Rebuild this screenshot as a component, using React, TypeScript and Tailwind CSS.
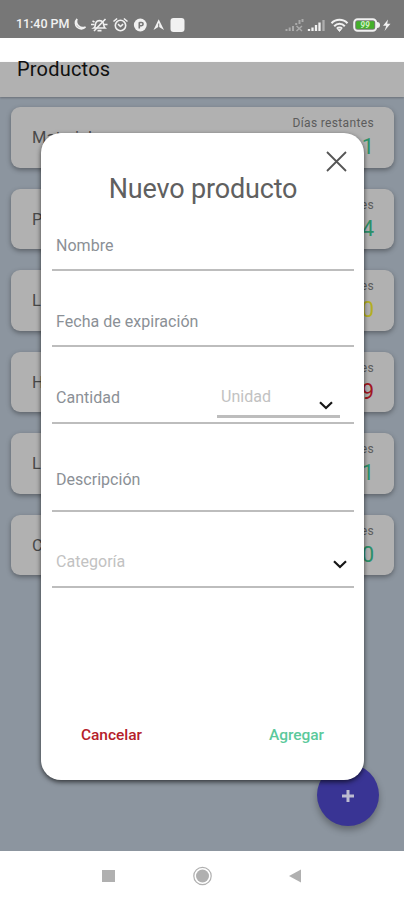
import React from "react";

const products = [
    { name: "Material", days: "11", color: "text-[#2c8f68]" },
    { name: "Pan", days: "14", color: "text-[#2c8f68]" },
    { name: "Luz", days: "10", color: "text-[#b3ae22]" },
    { name: "Hilo", days: "-9", color: "text-[#a11620]" },
    { name: "Lima", days: "31", color: "text-[#2c8f68]" },
    { name: "Col", days: "60", color: "text-[#2c8f68]" },
]

function StatusBar() {
    return (
        <div className="flex h-[38px] items-center bg-[#777777] pl-4 pr-[13px] pt-[11px] text-[#f1f1f1]">
            <span className="w-[55px] whitespace-nowrap text-[12.5px] font-medium leading-none tracking-[-0.05px]">11:40 PM</span>
            <svg className="h-4 w-[116px] shrink-0" viewBox="0 0 116 16" fill="none" stroke="currentColor" strokeWidth="1.6">
                <path d="M6 2a5.800 5.800 0 1 0 8.500 8A6.300 6.300 0 0 1 6 2Z" />
                <path d="M23 11c1.600-1 1-3.500 2-5.500 1.500-2.500 5.500-2.500 7 0 1 2 .4 4 2 5.500Z" />
                <path d="M26.500 13.600h4M34.500 2 23 14M20 7.500h3.500M33 7.500h3.500M21.500 4l2 1" />
                <circle cx="49.500" cy="8.500" r="5.200" />
                <path d="M47 7.200 49.500 9.500l2.600-2.300M42.500 4.500l3.600-3M56.500 4.500l-3.600-3" />
                <circle cx="69.300" cy="8" r="6.400" fill="currentColor" stroke="none" />
                <path d="M68.300 11.500V5.200M68.300 5.500h2.200a1.600 1.600 0 0 1 0 3.200h-2.200" stroke="#777777" />
                <path d="M82.500 13 87.700 2.300 93 13l-5.300-3.200Z" fill="currentColor" stroke="none" />
                <path d="M87.700 6.500v3.700" stroke="#777777" strokeWidth="1" />
                <rect x="99.500" y="1" width="14" height="14" rx="3" fill="currentColor" stroke="none" />
            </svg>
            <svg className="ml-auto h-4 w-[106px] shrink-0" viewBox="0 0 106 16" fill="none" stroke="currentColor">
                <g opacity=".42" strokeWidth="2">
                    <path d="M1.500 14v-2M4.700 14v-3.500M8 14V9M11.200 8V6M14.500 7V3M17.500 5V2" />
                    <path d="m11.500 9 5.500 5M17 9l-5.500 5" strokeWidth="1.500" />
                </g>
                <path d="M24 14v-2M27.500 14v-3.500M31 14V8M34.500 14V5.500" strokeWidth="2.300" />
                <path d="M38.500 14V3" strokeWidth="2.300" opacity=".45" />
                <path d="M46.500 6.300a11 11 0 0 1 16 0M49.200 9.200a7.200 7.200 0 0 1 10.600 0M51.800 11.600a3.900 3.900 0 0 1 5.400 0" strokeWidth="2" />
                <path d="m52.700 12.200 1.800 2.300 1.800-2.300Z" fill="currentColor" />
                <rect x="69.200" y="2.200" width="22" height="11.600" rx="3.500" fill="#777777" strokeWidth="2" />
                <path d="M92 5q3 0 3 3t-3 3Z" fill="currentColor" stroke="none" />
                <rect x="71.200" y="4.200" width="18" height="7.600" rx="1" fill="#43b02a" stroke="none" />
                <text x="80" y="11" fontSize="8.500" fontWeight="700" fontStyle="italic" textAnchor="middle" fill="#cdebc4" stroke="none">99</text>
                <path d="m103 2.500-5 6.300h3.300L99.500 14l6-7.200h-3.300Z" fill="currentColor" stroke="none" />
            </svg>
        </div>
    )
}

function ProductCard({ name, days, color }: { name: string, days: string, color: string }) {
    return (
        <div className="flex h-[60.500px] shrink-0 justify-between rounded-[9px] bg-[#b1b1b1] pl-[21px] pr-5 shadow-[0_2px_5px_rgba(0,0,0,0.35)]">
            <span className="pt-[19px] text-[16.500px] leading-6 text-[#494949]">{name}</span>
            <div className="flex flex-col items-end pt-[8px]">
                <span className="text-[12px] leading-4 tracking-[0.35px] text-[#5c5c5c]">Días restantes</span>
                <span className={"pt-[3px] text-[22px] leading-[26px] " + color}>{days}</span>
            </div>
        </div>
    )
}

function Chevron() {
    return (
        <svg className="h-[9px] w-[14px]" viewBox="0 0 14 9" fill="none" stroke="#161616" strokeWidth="2.200">
            <path d="m1 1.300 6 5.700 6-5.700" />
        </svg>
    )
}

function Field({ label, size }: { label: string, size: string }) {
    return (
        <div className={"flex items-end border-b-2 border-[#bdbdbd] pl-[4px] text-[#8b9096] " + size}>
            <span className="text-[16px] leading-5 tracking-[0.03px]">{label}</span>
        </div>
    )
}

function NewProduct() {
    return (
        <div className="absolute left-[41px] top-[133px] flex h-[647px] w-[323px] flex-col rounded-[20px] bg-white pl-[11px] pr-[10px] shadow-[0_2px_5px_rgba(0,0,0,0.65)]">
            <button className="mr-[7px] mt-[18px] self-end">
                <svg className="h-[21px] w-[21px]" viewBox="0 0 21 21" stroke="#555555" strokeWidth="1.800">
                    <path d="m1 1 19 19M20 1 1 20" />
                </svg>
            </button>
            <h2 className="h-8 pt-px text-center text-[27px] leading-8 tracking-[-0.17px] text-[#606060]">Nuevo producto</h2>
            <Field label="Nombre" size="h-[67px] pb-[13px]" />
            <Field label="Fecha de expiración" size="h-[76px] pb-[13px]" />
            <div className="flex h-[77px] items-end border-b-2 border-[#bdbdbd] pl-[4px]">
                <span className="w-[161px] pb-[14px] text-[16px] leading-5 tracking-[0.03px] text-[#8b9096]">Cantidad</span>
                <div className="mb-[4px] flex h-[34px] w-[123px] justify-between border-b-[3px] border-[#bdbdbd] pl-[4px] pr-[7px]">
                    <span className="pt-[3px] text-[16px] leading-5 tracking-[0.03px] text-[#c2c2c2]">Unidad</span>
                    <div className="pt-[17px]"><Chevron /></div>
                </div>
            </div>
            <Field label="Descripción" size="h-[88px] pb-[20px]" />
            <div className="flex h-[76px] items-end justify-between border-b-2 border-[#bdbdbd] pl-[4px] pr-[7px]">
                <span className="pb-[14px] text-[16px] leading-5 tracking-[0.03px] text-[#c2c2c2]">Categoría</span>
                <div className="pb-[17px]"><Chevron /></div>
            </div>
            <div className="mt-auto flex justify-between pb-[35px] pl-[29px] pr-[30px] text-[15.500px] font-medium leading-5 tracking-[-0.05px]">
                <button className="text-[#b5202a]">Cancelar</button>
                <button className="text-[#5bc99b]">Agregar</button>
            </div>
        </div>
    )
}

export default function App() {
    return (
        <div className="relative flex h-[900px] w-[404px] flex-col overflow-hidden bg-white font-['Roboto',sans-serif]">
            <StatusBar />
            <div className="h-6 shrink-0 bg-white" />
            <div className="z-10 flex h-[35px] shrink-0 bg-[#b1b1b1] pl-[17px] shadow-[0_1px_2px_rgba(0,0,0,0.25)]">
                <h1 className="-mt-[5px] text-[20px] leading-6 tracking-[0.2px] text-[#101010]">Productos</h1>
            </div>
            <div className="flex h-[754px] shrink-0 flex-col gap-[21.100px] bg-[#8c959f] pl-[11px] pr-[10px] pt-[10px]">
                {products.map((p) => <ProductCard key={p.name} {...p} />)}
            </div>
            <div className="flex h-[49px] items-center justify-center">
                <svg className="h-5 w-[202px]" viewBox="0 0 202 20" fill="#b0b0b0">
                    <rect x="1" y="4" width="13" height="12" />
                    <circle cx="101.500" cy="10" r="6.500" />
                    <circle cx="101.500" cy="10" r="8.700" fill="none" stroke="#b0b0b0" strokeWidth="1.200" />
                    <path d="M188 10 200 3.500v13Z" />
                </svg>
            </div>
            <button className="absolute left-[317px] top-[764px] flex h-[62px] w-[62px] items-center justify-center rounded-full bg-[#393494] shadow-[0_4px_7px_rgba(0,0,0,0.3)]">
                <svg className="mt-[2px] h-3 w-3" viewBox="0 0 12 12" stroke="#bdbcd0" strokeWidth="3">
                    <path d="M6 0v12M0 6h12" />
                </svg>
            </button>
            <NewProduct />
        </div>
    )
}
